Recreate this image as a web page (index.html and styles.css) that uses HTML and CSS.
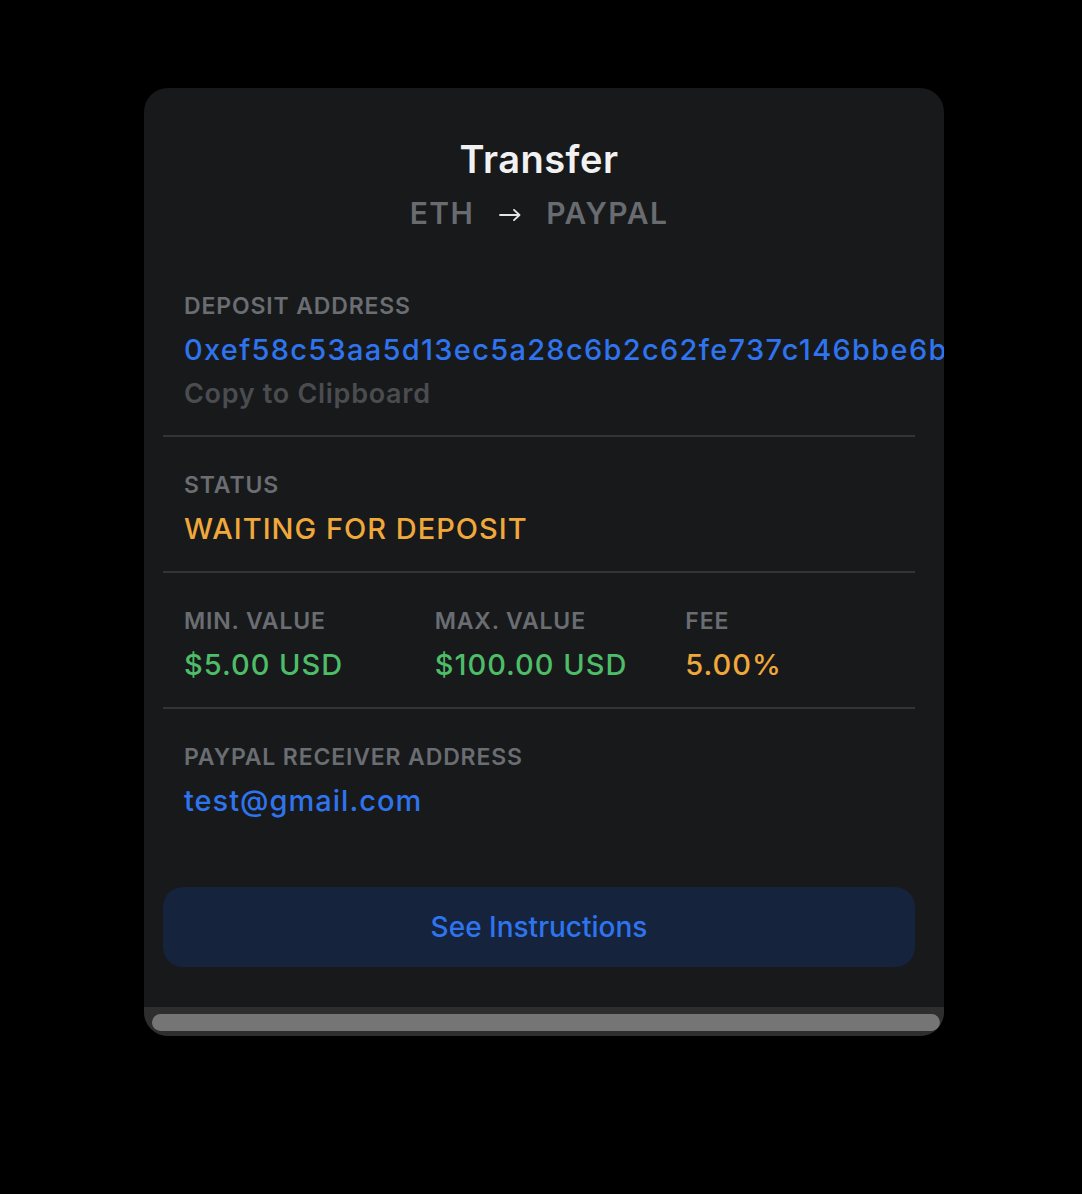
FILE: index.html
```html
<!DOCTYPE html>
<html lang="en">
<head>
  <meta charset="UTF-8">
  <title>Transfer</title>
  <meta name="viewport" content="width=device-width, initial-scale=1">
  <link rel="stylesheet" href="styles.css">
</head>
<body>

  <div class="card">
    <div class="inner">
      <div class="head">
        <h1>Transfer</h1>
        <div class="pair">
          <span>ETH</span>
          <svg class="arrow" width="22" height="12" viewBox="0 0 22 12"><path d="M1 6 H20.5 M15 0.8 L20.5 6 L15 11.2" fill="none" stroke="#e4e4e6" stroke-width="1.8" stroke-linecap="round" stroke-linejoin="round"/></svg>
          <span>PAYPAL</span>
        </div>
      </div>

      <div class="section">
        <div class="label">Deposit Address</div>
        <div class="value blue address">0xef58c53aa5d13ec5a28c6b2c62fe737c146bbe6b</div>
        <div class="copy">Copy to Clipboard</div>
      </div>

      <div class="section">
        <div class="label">Status</div>
        <div class="value orange">WAITING FOR DEPOSIT</div>
      </div>

      <div class="section cols">
        <div class="col">
          <div class="label">Min. Value</div>
          <div class="value green">$5.00 USD</div>
        </div>
        <div class="col">
          <div class="label">Max. Value</div>
          <div class="value green">$100.00 USD</div>
        </div>
        <div class="col">
          <div class="label">Fee</div>
          <div class="value orange">5.00%</div>
        </div>
      </div>

      <div class="section last">
        <div class="label">Paypal Receiver Address</div>
        <div class="value blue">test@gmail.com</div>
      </div>

      <button class="btn">See Instructions</button>
    </div>

    <div class="scrollbar"><div class="thumb"></div></div>
  </div>

</body>
</html>
```

FILE: styles.css
```css
* { margin: 0; padding: 0; box-sizing: border-box; font-family: 'Inter', 'Noto Sans', sans-serif; }
body {
  background: #000;
  padding: 88px 0 0 144px;
}
.card {
  width: 800px;
  height: 948px;
  background: #18191b;
  border-radius: 24px;
  overflow: hidden;
  display: flex;
  flex-direction: column;
}
.inner {
  flex: 1;
  width: 752px;
  margin-left: 19px;
  padding-top: 48px;
}
.head { text-align: center; margin-bottom: 27px; }
h1 {
  font-size: 38px;
  line-height: 46px;
  font-weight: 600;
  color: #f1f1f2;
  letter-spacing: 0.5px;
}
.pair {
  margin-top: 13px;
  display: flex;
  justify-content: center;
  align-items: center;
  gap: 25px;
  font-size: 30px;
  line-height: 36px;
  font-weight: 600;
  color: #686b70;
  letter-spacing: 1.4px;
}
.arrow { margin-top: 4px; }
.section {
  padding: 34px 21px 25px;
  border-bottom: 2px solid #333437;
}
.section.last { border-bottom: none; }
.cols { display: grid; grid-template-columns: repeat(3, 1fr); padding-left: 0; padding-right: 0; }
.col { padding-left: 21px; }
.label {
  font-size: 23px;
  line-height: 28px;
  font-weight: 600;
  color: #6a6d72;
  text-transform: uppercase;
  letter-spacing: 0.85px;
}
.value {
  margin-top: 13px;
  font-size: 29px;
  line-height: 34px;
  font-weight: 500;
  letter-spacing: 1px;
}
.address { white-space: nowrap; letter-spacing: 1.3px; }
.blue { color: #2f74ef; }
.orange { color: #f0a83b; }
.green { color: #4dbd68; }
.copy {
  margin-top: 11px;
  font-size: 27px;
  line-height: 32px;
  font-weight: 600;
  color: #4a4c50;
  letter-spacing: 0.7px;
}
.btn {
  display: block;
  width: 100%;
  height: 80px;
  margin-top: 44px;
  border: none;
  border-radius: 20px;
  background: #16233d;
  color: #2f74ef;
  font-size: 28px;
  font-weight: 500;
}
.scrollbar {
  height: 29px;
  background: #2e2e2f;
  padding: 7px 4px 5px 8px;
}
.thumb {
  height: 17px;
  background: #757575;
  border-radius: 9px;
}
```
